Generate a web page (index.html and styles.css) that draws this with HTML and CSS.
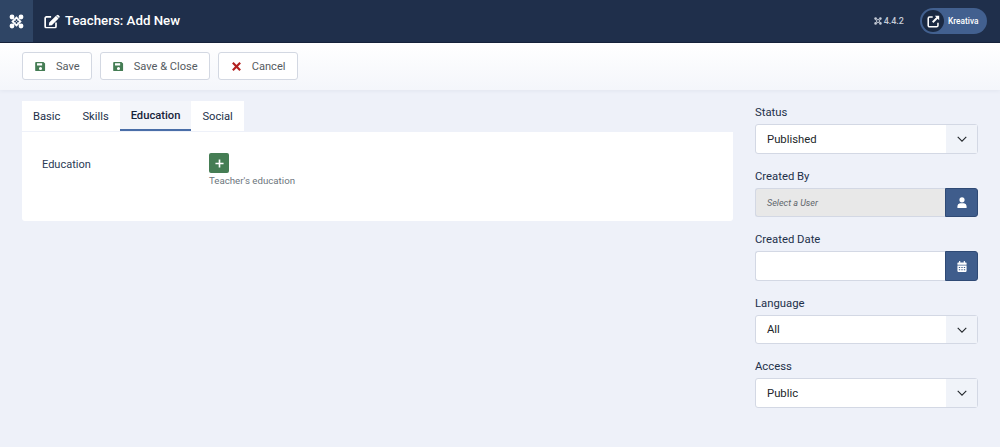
FILE: index.html
```html
<!DOCTYPE html>
<html lang="en">
<head>
    <meta charset="UTF-8">
    <meta name="viewport" content="width=device-width, initial-scale=1.0">
    <title>Teachers: Add New</title>
    <link rel="stylesheet" href="styles.css">
</head>
<body>
    <header class="topbar">
        <div class="logo-box">
            <svg class="joomla" viewBox="0 0 16 16"><use href="#joomla"></use></svg>
        </div>
        <div class="page-title">
            <svg class="title-icon" viewBox="0 0 18 16"><use href="#edit"></use></svg>
            <h1>Teachers: Add New</h1>
        </div>
        <div class="version">
            <svg class="joomla-small" viewBox="0 0 16 16"><use href="#joomla"></use></svg>
            <span>4.4.2</span>
        </div>
        <div class="site-pill">
            <span class="site-icon">
                <svg viewBox="0 0 16 16"><path d="M7 2.500H3.200A1.700 1.700 0 0 0 1.500 4.200v8.600a1.700 1.700 0 0 0 1.700 1.700h8.600a1.700 1.700 0 0 0 1.700-1.700V9.500" fill="none" stroke="#fff" stroke-width="1.900"/><path d="M9.600 1h5.400v5.400l-1.900-1.800-5.200 5.200-1.700-1.700 5.200-5.200z" fill="#fff"/></svg>
            </span>
            <span class="site-name">Kreativa</span>
        </div>
    </header>

    <div class="toolbar">
        <button class="tool-btn">
            <svg class="btn-icon" viewBox="0 0 12 12"><use href="#save"></use></svg>Save
        </button>
        <button class="tool-btn">
            <svg class="btn-icon" viewBox="0 0 12 12"><use href="#save"></use></svg>Save &amp; Close
        </button>
        <button class="tool-btn">
            <svg class="btn-icon" viewBox="0 0 12 12"><path d="M2 2l8 8M10 2l-8 8" stroke="#b3201f" stroke-width="2.400" fill="none"/></svg>Cancel
        </button>
    </div>

    <main class="content">
        <section class="main-col">
            <div class="tabs">
                <button class="tab">Basic</button>
                <button class="tab">Skills</button>
                <button class="tab active">Education</button>
                <button class="tab">Social</button>
            </div>
            <div class="panel">
                <div class="panel-label">Education</div>
                <div class="panel-field">
                    <button class="add-btn">
                        <svg viewBox="0 0 10 10"><path d="M5 .5v9M.5 5h9" stroke="#fff" stroke-width="1.800" fill="none"/></svg>
                    </button>
                    <div class="hint">Teacher's education</div>
                </div>
            </div>
        </section>

        <aside class="side-col">
            <div class="field">
                <label>Status</label>
                <div class="select"><span>Published</span><i class="caret"><svg viewBox="0 0 14 8"><path d="M1 1l6 6 6-6" fill="none" stroke="#22262a" stroke-width="1.500"/></svg></i></div>
            </div>
            <div class="field">
                <label>Created By</label>
                <div class="input-group">
                    <div class="input readonly">Select a User</div>
                    <button class="group-btn">
                        <svg viewBox="0 0 12 13"><circle cx="6" cy="3.300" r="3.100" fill="#fff"/><path d="M.5 13v-2.200a3.600 3.600 0 0 1 3-3.400h5a3.600 3.600 0 0 1 3 3.400V13z" fill="#fff"/></svg>
                    </button>
                </div>
            </div>
            <div class="field">
                <label>Created Date</label>
                <div class="input-group">
                    <div class="input"></div>
                    <button class="group-btn">
                        <svg viewBox="0 0 12 13"><path d="M2.500 0h1.400v1.600h4.200V0h1.400v1.600h1.200a.8.8 0 0 1 .8.8v2.100H.5V2.400a.8.8 0 0 1 .8-.8h1.200z" fill="#fff"/><path d="M.5 5.300h11V12a1 1 0 0 1-1 1h-9a1 1 0 0 1-1-1z" fill="#fff"/><path d="M2.200 7h1.600v1.300H2.200zM5.200 7h1.600v1.300H5.200zM8.200 7h1.600v1.300H8.200zM2.200 9.800h1.600v1.300H2.200zM5.200 9.800h1.600v1.300H5.200zM8.200 9.800h1.600v1.300H8.200z" fill="#3f5d8c"/></svg>
                    </button>
                </div>
            </div>
            <div class="field">
                <label>Language</label>
                <div class="select"><span>All</span><i class="caret"><svg viewBox="0 0 14 8"><path d="M1 1l6 6 6-6" fill="none" stroke="#22262a" stroke-width="1.500"/></svg></i></div>
            </div>
            <div class="field">
                <label>Access</label>
                <div class="select"><span>Public</span><i class="caret"><svg viewBox="0 0 14 8"><path d="M1 1l6 6 6-6" fill="none" stroke="#22262a" stroke-width="1.500"/></svg></i></div>
            </div>
        </aside>
    </main>

    <svg class="icon-defs" aria-hidden="true">
        <symbol id="joomla" viewBox="0 0 16 16">
            <path d="M8 3.800L12.200 8 8 12.200 3.800 8z" fill="none" stroke="currentColor" stroke-width="1.900"/>
            <g fill="currentColor">
                <circle cx="3.200" cy="3.200" r="2.600"/>
                <circle cx="12.800" cy="3.200" r="2.600"/>
                <circle cx="3.200" cy="12.800" r="2.600"/>
                <circle cx="12.800" cy="12.800" r="2.600"/>
            </g>
            <path d="M3.200 3.200l9.600 9.600M12.800 3.200l-9.600 9.600" stroke="currentColor" stroke-width="1" fill="none" opacity=".5"/>
        </symbol>
        <symbol id="edit" viewBox="0 0 18 16">
            <path d="M8 2.800H2.800a1.500 1.500 0 0 0-1.500 1.500v9.200A1.500 1.500 0 0 0 2.800 15h9.200a1.500 1.500 0 0 0 1.500-1.500V9" fill="none" stroke="currentColor" stroke-width="1.900"/>
            <path d="M13.500 1.600l2.900 2.900-7.600 7.600-3.400.5.500-3.400zM14.400.7a1.200 1.200 0 0 1 1.700 0l1.200 1.200a1.200 1.200 0 0 1 0 1.700l-.6.600-2.900-2.900z" fill="currentColor"/>
        </symbol>
        <symbol id="save" viewBox="0 0 12 12">
            <path d="M1.200 1h8L11 2.800V10a1 1 0 0 1-1 1H1.200a1 1 0 0 1-1-1V2a1 1 0 0 1 1-1zM2.200 2.500v2.400h5.600V2.500zM6 6.500a1.700 1.700 0 1 0 0 3.400 1.700 1.700 0 0 0 0-3.400z" fill="#457d54" fill-rule="evenodd"/>
        </symbol>
    </svg>
</body>
</html>
```

FILE: styles.css
```css
* {
    box-sizing: border-box;
}

body {
    margin: 0;
    height: 447px;
    overflow: hidden;
    background-color: #eef1f9;
    color: #22262a;
    font-family: Roboto, "Liberation Sans", sans-serif;
    font-size: 11px;
}

button {
    font-family: inherit;
    cursor: pointer;
}

.icon-defs {
    display: none;
}

/* top bar */
.topbar {
    display: flex;
    align-items: center;
    height: 43px;
    background-color: #1f2f4b;
    border-bottom: 1px solid #17233a;
    color: #fff;
}

.logo-box {
    display: flex;
    align-items: center;
    justify-content: center;
    width: 33px;
    height: 42px;
    background-color: #2f4565;
}

.joomla {
    width: 15px;
    height: 15px;
    color: #fff;
}

.page-title {
    display: flex;
    align-items: center;
    flex: 1;
    margin-left: 11px;
}

.title-icon {
    width: 16px;
    height: 15px;
    margin-right: 5px;
    color: #fff;
}

.page-title h1 {
    margin: 0;
    font-size: 13.300px;
    font-weight: 500;
    line-height: 20px;
}

.version {
    display: flex;
    align-items: center;
    margin-right: 16px;
    color: #c5cbd6;
    font-size: 9px;
    font-weight: 500;
}

.joomla-small {
    width: 8px;
    height: 8px;
    margin-right: 2px;
    color: #c5cbd6;
}

.site-pill {
    display: flex;
    align-items: center;
    width: 67px;
    height: 26px;
    margin-right: 13px;
    padding-left: 2px;
    border-radius: 13px;
    background-color: #42608f;
}

.site-icon {
    display: flex;
    align-items: center;
    justify-content: center;
    width: 22px;
    height: 22px;
    border-radius: 50%;
    background-color: #1a2942;
}

.site-icon svg {
    width: 13px;
    height: 13px;
}

.site-name {
    margin-left: 4px;
    font-size: 8.300px;
    font-weight: 500;
}

/* toolbar */
.toolbar {
    display: flex;
    gap: 8px;
    height: 47px;
    padding: 9px 22px 0;
    background: linear-gradient(#fff, #f4f6fb);
    box-shadow: 0 1px 4px rgba(30, 50, 90, 0.06);
}

.tool-btn {
    display: flex;
    align-items: center;
    height: 28px;
    padding: 0 11px 0 12px;
    border: 1px solid #d3d8e2;
    border-radius: 3px;
    background-color: #fff;
    color: #555b61;
    font-size: 11.100px;
}

.btn-icon {
    width: 11px;
    height: 11px;
    margin-right: 10px;
}

/* page body */
.content {
    display: flex;
    gap: 22px;
    padding: 11px 22px 0;
}

.main-col {
    width: 711px;
}

.tabs {
    display: flex;
    width: 222px;
    height: 30px;
    background-color: #fff;
}

.tab {
    height: 30px;
    padding: 0 11px;
    border: 0;
    background: none;
    color: #22304a;
    font-size: 11.200px;
}

.tab.active {
    background-color: #f3f5fa;
    border-bottom: 2px solid #4a6ea8;
    color: #16233a;
    font-weight: 500;
}

.panel {
    display: flex;
    height: 89px;
    margin-top: 1px;
    padding: 21px 20px 0;
    border-radius: 0 0 3px 3px;
    background-color: #fff;
}

.panel-label {
    width: 167px;
    padding-top: 6px;
    color: #2a3a55;
    font-size: 11px;
    line-height: 12px;
}

.add-btn {
    display: flex;
    align-items: center;
    justify-content: center;
    width: 20px;
    height: 20px;
    padding: 0;
    border: 0;
    border-radius: 2px;
    background-color: #457d54;
}

.add-btn svg {
    width: 9px;
    height: 9px;
}

.hint {
    margin-top: 1px;
    color: #6c757d;
    font-size: 9.700px;
    line-height: 14px;
}

/* right column */
.side-col {
    width: 223px;
    padding-top: 4.400px;
}

.field {
    margin-bottom: 15px;
}

.field label {
    display: block;
    height: 15px;
    margin-bottom: 4px;
    color: #22304a;
    font-size: 11.300px;
    line-height: 15px;
}

.select {
    display: flex;
    align-items: center;
    justify-content: space-between;
    height: 29.500px;
    border: 1px solid #d3d8e4;
    border-radius: 3px;
    background-color: #fff;
    font-size: 11.300px;
}

.select span {
    padding-left: 11px;
}

.caret {
    display: flex;
    align-items: center;
    justify-content: center;
    width: 31px;
    height: 100%;
    background-color: #f0f3f9;
}

.caret svg {
    width: 10px;
    height: 6px;
}

.input-group {
    display: flex;
    height: 29.500px;
}

.input {
    flex: 1;
    padding-left: 11px;
    border: 1px solid #d3d8e4;
    border-right: 0;
    border-radius: 3px 0 0 3px;
    background-color: #fff;
    line-height: 29px;
}

.input.readonly {
    background-color: #e8e8e8;
    color: #5f656b;
    font-size: 9px;
    font-style: italic;
}

.group-btn {
    display: flex;
    align-items: center;
    justify-content: center;
    width: 33px;
    height: 100%;
    padding: 0;
    border: 1px solid #2f4a75;
    border-radius: 0 3px 3px 0;
    background-color: #3f5d8c;
}

.group-btn svg {
    width: 10px;
    height: 11px;
}
```
